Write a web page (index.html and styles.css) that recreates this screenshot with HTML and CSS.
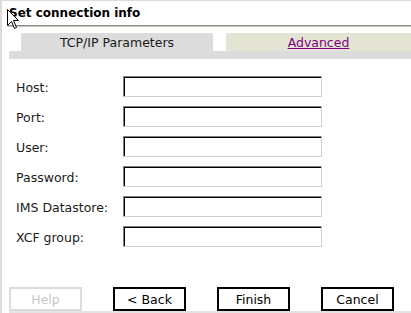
FILE: index.html
```html
<!DOCTYPE html>
<html>
<head>
<meta charset="utf-8">
<link rel="stylesheet" href="styles.css">
</head>
<body>
<div class="frame">
  <div class="title">Set connection info</div>
  <div class="rule"></div>
  <div class="tabs">
    <div class="tab-gap-left"></div>
    <div class="tab tab-active">TCP/IP Parameters</div>
    <div class="tab-gap"></div>
    <div class="tab tab-other"><a href="#">Advanced</a></div>
  </div>
  <div class="tab-strip"></div>
  <div class="form">
    <label class="lbl">Host:</label><div class="field"></div>
    <label class="lbl">Port:</label><div class="field"></div>
    <label class="lbl">User:</label><div class="field"></div>
    <label class="lbl">Password:</label><div class="field"></div>
    <label class="lbl">IMS Datastore:</label><div class="field"></div>
    <label class="lbl">XCF group:</label><div class="field"></div>
  </div>
  <div class="buttons">
    <div class="btn btn-disabled">Help</div>
    <div class="btn">&lt; Back</div>
    <div class="btn">Finish</div>
    <div class="btn">Cancel</div>
  </div>
  <div class="bottom-strip"></div>
  <svg class="cursor" width="12" height="21" viewBox="0 0 12 21">
    <path d="M0.5 0.5 L0.5 16.5 L4.5 12.5 L7.5 19.5 L9.5 18.5 L6.5 11.5 L11.5 11.5 Z" fill="#fff" stroke="#000" stroke-width="1"/>
  </svg>
</div>
</body>
</html>
```
FILE: styles.css
```css
html, body {
  margin: 0;
  padding: 0;
  background: #fff;
}
.frame {
  position: relative;
  box-sizing: border-box;
  width: 411px;
  height: 313px;
  border-top: 1px solid #dcdcdc;
  border-left: 2px solid #dcdcdc;
  display: flex;
  flex-direction: column;
  font-family: "DejaVu Sans", Verdana, sans-serif;
  font-size: 12.5px;
  color: #1a1a1a;
}
.title {
  height: 24px;
  margin-left: 7px;
  font-size: 12px;
  font-weight: bold;
  line-height: 14px;
  padding-top: 5px;
  box-sizing: border-box;
  color: #000;
}
.rule {
  margin-left: 6px;
  height: 0;
  border-top: 1px solid #8c8c84;
  border-bottom: 1px solid #c4c4bc;
}
.tabs {
  margin-top: 6px;
  margin-left: 7px;
  height: 18px;
  display: flex;
}
.tab-gap-left {
  width: 12px;
}
.tab {
  display: flex;
  align-items: center;
  justify-content: center;
  line-height: 15px;
}
.tab-active {
  width: 192px;
  background: #dcdcdc;
}
.tab-gap {
  width: 13px;
}
.tab-other {
  flex: 1;
  background: #e4e4d4;
}
.tab-other a {
  color: #800080;
  text-decoration: underline;
}
.tab-strip {
  margin-left: 7px;
  height: 8px;
  background: #dcdcdc;
}
.form {
  margin-top: 17px;
  display: grid;
  grid-template-columns: 107px 199px;
  grid-auto-rows: 21px;
  row-gap: 9px;
  padding-left: 14px;
}
.lbl {
  display: flex;
  align-items: center;
  padding-top: 1px;
}
.field {
  box-sizing: border-box;
  background: #fff;
  border-top: 1px solid #808080;
  border-left: 1px solid #808080;
  border-right: 1px solid #d4d0c8;
  border-bottom: 1px solid #d4d0c8;
  box-shadow: inset 1px 1px 0 #000;
}
.buttons {
  margin-top: auto;
  margin-left: 7px;
  display: flex;
  gap: 31px;
}
.btn {
  box-sizing: border-box;
  width: 73px;
  height: 24px;
  border: 2px solid #000;
  display: flex;
  align-items: center;
  justify-content: center;
  color: #000;
}
.btn-disabled {
  border-color: #dcdcdc;
  color: #c8c8c8;
}
.bottom-strip {
  margin-left: 7px;
  height: 2px;
  background: #e4e4e4;
}
.cursor {
  position: absolute;
  left: 5px;
  top: 8px;
}
```
